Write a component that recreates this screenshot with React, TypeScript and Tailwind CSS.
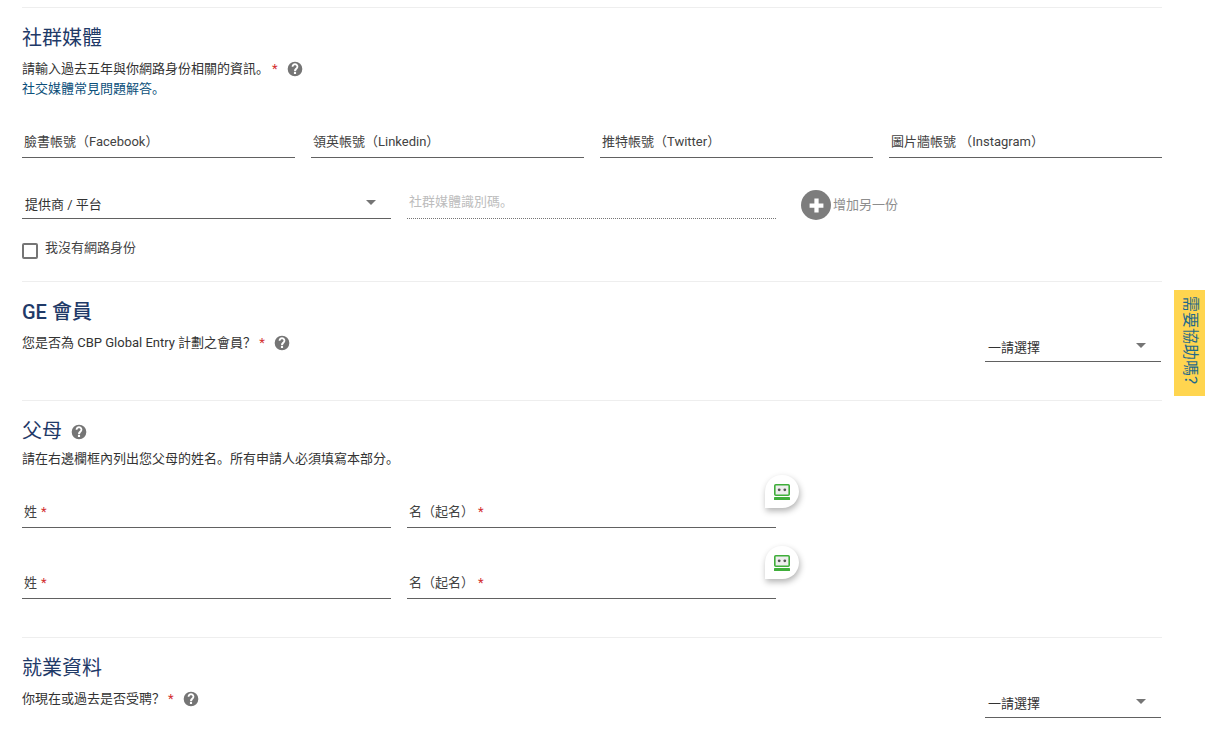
const font = "font-['Roboto','Noto_Sans_CJK_SC',sans-serif]";

function Req() {
  return <span className="text-[13px] text-[#d32f2f]">*</span>;
}

function Help() {
  return (
    <svg viewBox="0 0 24 24" className="h-[16px] w-[16px] shrink-0" fill="#757575">
      <path d="M12 1a11 11 0 1 0 0 22 11 11 0 0 0 0-22zm1.600 18.500h-3.200v-3h3.200v3zm2.700-8.300-1.200 1.200c-.9.900-1.500 1.600-1.500 3.100h-3v-.7c0-1.300.5-2.500 1.500-3.400l1.600-1.600c.4-.4.600-.9.600-1.500 0-1.100-.9-2-2.300-2s-2.300.9-2.300 2.200H7C7 5.600 9.200 3.500 12 3.500s5 2.100 5 4.700c0 1.200-.5 2.300-1.300 3z" />
    </svg>
  );
}

function Question({ text }: { text: string }) {
  return (
    <div className="mt-[8px] flex h-[18px] items-center text-[13px] text-[#333]">
      <span>{text}</span>
      <span className="ml-[3px] mr-[9px]"><Req /></span>
      <Help />
    </div>
  );
}

function Field({ label, req }: { label: string; req?: boolean }) {
  return (
    <div className="flex h-[34px] items-center gap-[4px] border-b border-[#616161] px-[2px] pt-[2px] text-[13px] text-[#424242]">
      <span>{label}</span>
      {req && <Req />}
    </div>
  );
}

function Select({ label }: { label: string }) {
  return (
    <div className="flex h-[34px] items-center justify-between border-b border-[#616161] pl-[3px] pr-[15px] text-[13px] text-[#333]">
      <span className="mt-[6px]">{label}</span>
      <span className="mt-[2px] h-0 w-0 border-x-[5px] border-t-[5px] border-x-transparent border-t-[#757575]" />
    </div>
  );
}

function Bubble() {
  return (
    <div className="absolute right-[-23px] top-[-19px] flex h-[33px] w-[34px] items-center justify-center rounded-t-full rounded-br-full bg-white shadow-[1px_3px_6px_rgba(0,0,0,0.3)]">
      <svg viewBox="0 0 16 16" width="16" height="16">
        <rect x="0.800" y="0.800" width="14.400" height="10.400" rx="1" fill="#eeeeee" stroke="#3fae3a" strokeWidth="1.600" />
        <circle cx="5.200" cy="5.800" r="1.400" fill="#555555" />
        <circle cx="10.800" cy="5.800" r="1.400" fill="#555555" />
        <rect x="0" y="13" width="16" height="3" rx="0.600" fill="#3fae3a" />
      </svg>
    </div>
  );
}

function Title({ children }: { children: React.ReactNode }) {
  return <h2 className="text-[20px] leading-[28px] text-[#1f3a68]">{children}</h2>;
}

export default function App() {
  return (
    <div className={`${font} relative h-[743px] w-[1205px] overflow-hidden bg-white`}>
      <div className="ml-[22px] w-[1140px] pt-[7px]">
        {/* 社群媒體 */}
        <section className="h-[274px] border-t border-[#eeeeee] pt-[16px]">
          <Title>社群媒體</Title>
          <Question text="請輸入過去五年與你網路身份相關的資訊。" />
          <a className="mt-[1px] block text-[13px] leading-[20px] text-[#0b4f7a]">社交媒體常見問題解答。</a>
          <div className="mt-[25px] grid grid-cols-4 gap-x-[16px]">
            <Field label="臉書帳號（Facebook）" />
            <Field label="領英帳號（Linkedin）" />
            <Field label="推特帳號（Twitter）" />
            <Field label="圖片牆帳號 （Instagram）" />
          </div>
          <div className="mt-[27px] flex items-center">
            <div className="w-[369px]">
              <Select label="提供商 / 平台" />
            </div>
            <div className="ml-[16px] flex h-[34px] w-[369px] items-center border-b border-dotted border-[#757575] px-[2px] text-[13px] text-[#bdbdbd]">
              社群媒體識別碼。
            </div>
            <button className="ml-[25px] -mb-px flex items-center self-end text-[13px] text-[#8d8d8d]">
              <span className="flex h-[30px] w-[30px] items-center justify-center rounded-full bg-[#7d7d7d]">
                <svg viewBox="0 0 16 16" width="17" height="17">
                  <path d="M6 1.500h4V6h4.500v4H10v4.500H6V10H1.500V6H6z" fill="#fff" />
                </svg>
              </span>
              <span className="ml-[2px]">增加另一份</span>
            </button>
          </div>
          <label className="mt-[20px] flex items-start gap-[7px] text-[13px] text-[#424242]">
            <span className="mt-[4px] h-[16px] w-[16px] rounded-[2px] border-2 border-[#757575]" />
            <span className="leading-[18px]">我沒有網路身份</span>
          </label>
        </section>

        {/* GE 會員 */}
        <section className="h-[119px] border-t border-[#eeeeee] pt-[16px]">
          <h2 className="text-[20px] font-medium leading-[28px] text-[#1f3a68]">GE 會員</h2>
          <div className="flex items-start justify-between">
            <Question text="您是否為 CBP Global Entry 計劃之會員？" />
            <div className="mr-px mt-[2px] w-[176px]">
              <Select label="一請選擇" />
            </div>
          </div>
        </section>

        {/* 父母 */}
        <section className="h-[237px] border-t border-[#eeeeee] pt-[16px]">
          <div className="flex items-center gap-[9px]">
            <Title>父母</Title>
            <span className="mt-[2px]"><Help /></span>
          </div>
          <p className="mt-[5px] text-[13px] leading-[18px] text-[#333]">請在右邊欄框內列出您父母的姓名。所有申請人必須填寫本部分。</p>
          <div className="mt-[26px] grid w-[754px] grid-cols-2 gap-x-[16px] gap-y-[37px]">
            <Field label="姓" req />
            <div className="relative"><Field label="名（起名）" req /><Bubble /></div>
            <Field label="姓" req />
            <div className="relative"><Field label="名（起名）" req /><Bubble /></div>
          </div>
        </section>

        {/* 就業資料 */}
        <section className="border-t border-[#eeeeee] pt-[16px]">
          <Title>就業資料</Title>
          <div className="flex items-start justify-between">
            <Question text="你現在或過去是否受聘？" />
            <div className="mr-px mt-[2px] w-[176px]">
              <Select label="一請選擇" />
            </div>
          </div>
        </section>
      </div>

      <div className="absolute left-[1174px] top-[290px] flex h-[106px] w-[31px] items-center justify-start bg-[#ffd54f] pt-[6px] text-[16px] text-[#1f6a8a] [text-orientation:sideways] [writing-mode:vertical-rl]">
        需要協助嗎？
      </div>
    </div>
  );
}
